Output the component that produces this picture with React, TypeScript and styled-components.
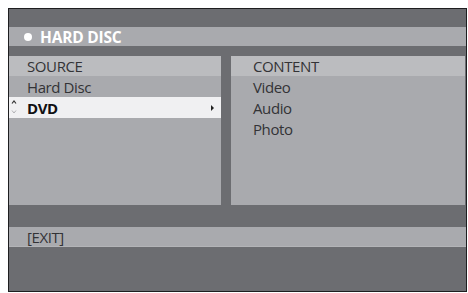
import styled, { createGlobalStyle } from 'styled-components';

const GlobalStyle = createGlobalStyle`
  body {
    margin: 0;
    background: #ffffff;
    font-family: 'Open Sans', 'Liberation Sans', sans-serif;
  }
`;

const Page = styled.div`
  width: 468px;
  height: 293px;
  padding: 8px 0 0 8px;
  box-sizing: border-box;
`;

const Frame = styled.div`
  width: 459px;
  height: 284px;
  box-sizing: border-box;
  border: 1px solid #1e1e20;
  background: #6c6d71;
  display: flex;
  flex-direction: column;
`;

const TopBand = styled.div`
  height: 18px;
`;

const TitleBar = styled.div`
  height: 19px;
  background: #a9aaae;
  display: flex;
  align-items: center;
  padding-left: 15px;
  gap: 8px;
  color: #ffffff;
  font-weight: bold;
  font-size: 15.5px;
  letter-spacing: -0.2px;
`;

const Dot = styled.span`
  width: 8px;
  height: 8px;
  border-radius: 50%;
  background: #ffffff;
`;

const Panels = styled.div`
  margin-top: 10px;
  height: 149px;
  display: flex;
  gap: 10px;
  padding-right: 1px;
`;

const Panel = styled.div<{ $width: number }>`
  width: ${(p) => p.$width}px;
  background: #a9aaae;
  display: flex;
  flex-direction: column;
`;

const Row = styled.div<{ $header?: boolean; $selected?: boolean }>`
  position: relative;
  height: ${(p) => (p.$header ? 20 : 21)}px;
  display: flex;
  align-items: center;
  padding-left: 18px;
  font-size: 15px;
  letter-spacing: -0.4px;
  color: ${(p) => (p.$selected ? '#111113' : '#333336')};
  font-weight: ${(p) => (p.$selected ? 'bold' : 'normal')};
  background: ${(p) => (p.$header ? '#bbbcbf' : p.$selected ? '#f0f0f2' : 'transparent')};
`;

const RightPanelRow = styled(Row)`
  padding-left: 22px;
`;

const ScrollMark = styled.svg`
  position: absolute;
  left: 2px;
  top: 2px;
`;

const Caret = styled.span`
  position: absolute;
  right: 7px;
  top: 8px;
  width: 0;
  height: 0;
  border-top: 3px solid transparent;
  border-bottom: 3px solid transparent;
  border-left: 3px solid #222;
`;

const MidBand = styled.div`
  height: 22px;
`;

const ExitBar = styled.div`
  height: 20px;
  background: #a9aaae;
  border-bottom: 1px solid #b3b4b7;
  box-sizing: border-box;
  display: flex;
  align-items: center;
  padding-left: 18px;
  font-size: 15px;
  letter-spacing: -0.4px;
  color: #333336;
`;

export default function App() {
  return (
    <Page>
      <GlobalStyle />
      <Frame>
        <TopBand />
        <TitleBar>
          <Dot />
          HARD DISC
        </TitleBar>
        <Panels>
          <Panel $width={212}>
            <Row $header>SOURCE</Row>
            <Row>Hard Disc</Row>
            <Row $selected>
              <ScrollMark width="6" height="16" viewBox="0 0 6 16">
                <path d="M1 4.5 L3 2 L5 4.5" fill="none" stroke="#333" strokeWidth="1.2" />
                <path d="M1 11.5 L3 14 L5 11.5" fill="none" stroke="#b0b0b4" strokeWidth="1" />
              </ScrollMark>
              DVD
              <Caret />
            </Row>
          </Panel>
          <Panel $width={234}>
            <RightPanelRow $header>CONTENT</RightPanelRow>
            <RightPanelRow>Video</RightPanelRow>
            <RightPanelRow>Audio</RightPanelRow>
            <RightPanelRow>Photo</RightPanelRow>
          </Panel>
        </Panels>
        <MidBand />
        <ExitBar>[EXIT]</ExitBar>
      </Frame>
    </Page>
  );
}
